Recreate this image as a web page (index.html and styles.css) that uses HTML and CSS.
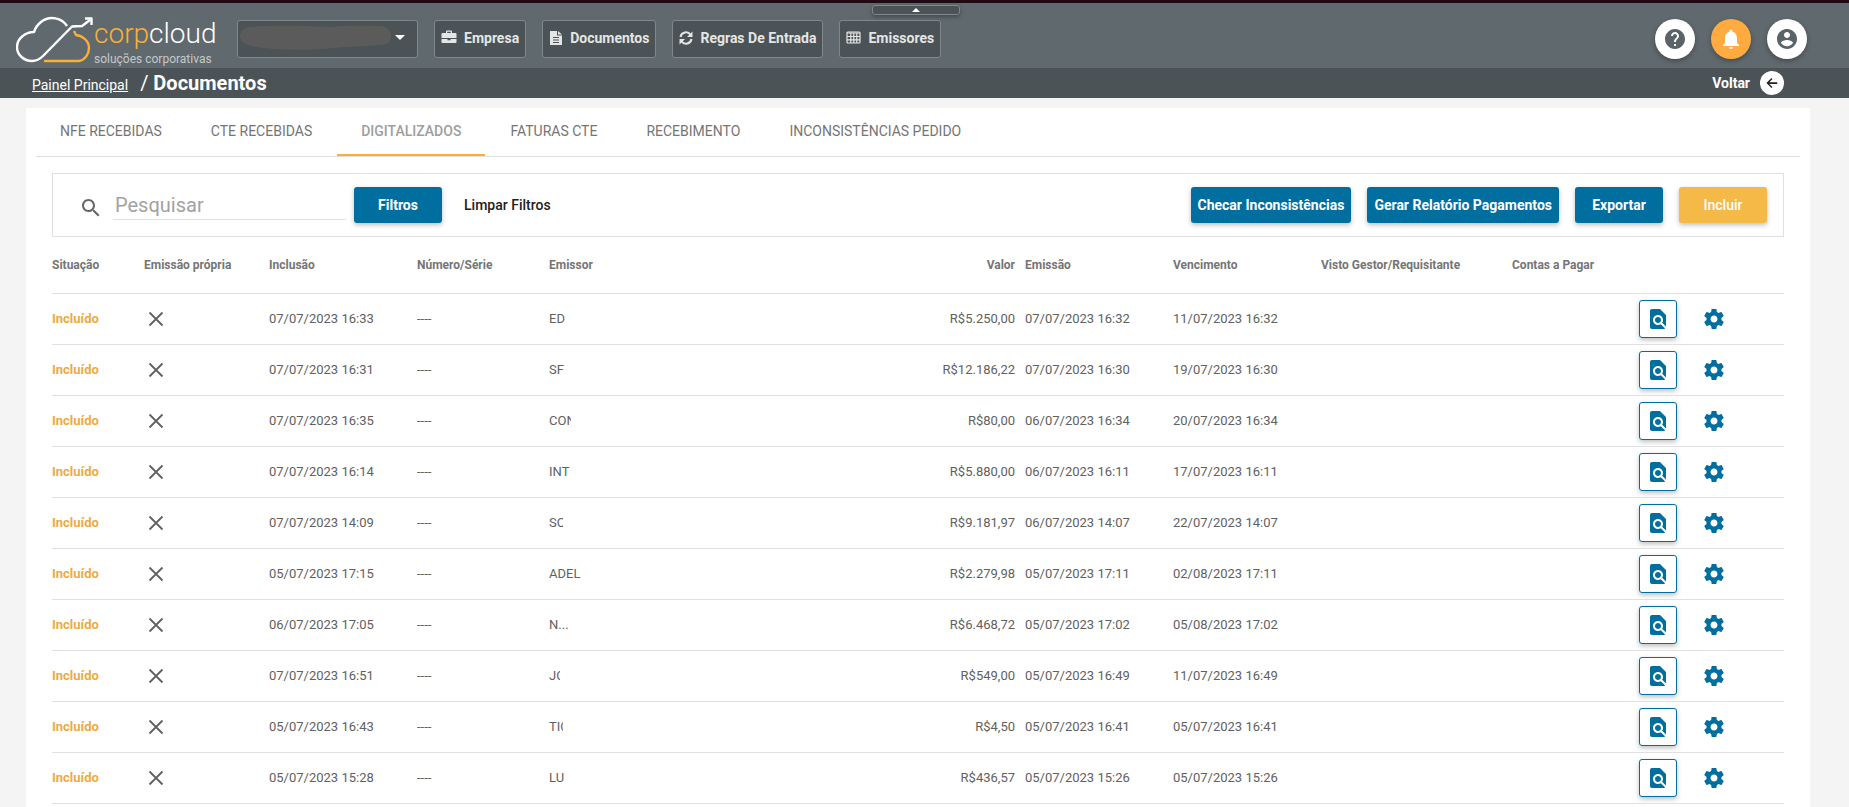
FILE: index.html
```html
<!DOCTYPE html>
<html lang="pt-BR">
<head>
<meta charset="utf-8">
<title>Documentos</title>
<link rel="stylesheet" href="styles.css">
</head>
<body>
<svg class="defs" aria-hidden="true">
  <symbol id="i-close" viewBox="0 0 24 24"><path d="M5.500 5.500L18.500 18.500M18.500 5.500L5.500 18.500" fill="none" stroke="currentColor" stroke-width="1.800"/></symbol>
  <symbol id="i-find" viewBox="0 0 24 24"><path d="M20 19.590V8l-6-6H6c-1.100 0-1.990.9-1.990 2L4 20c0 1.100.89 2 1.990 2H18c.45 0 .85-.15 1.190-.4l-4.430-4.430c-.8.520-1.740.83-2.760.83-2.760 0-5-2.240-5-5s2.240-5 5-5 5 2.240 5 5c0 1.020-.31 1.960-.83 2.750L20 19.590zM9 13c0 1.660 1.340 3 3 3s3-1.340 3-3-1.340-3-3-3-3 1.340-3 3z"/></symbol>
  <symbol id="i-gear" viewBox="0 0 24 24"><path d="M19.430 12.980c.04-.32.07-.64.07-.98s-.03-.66-.07-.98l2.110-1.650c.19-.15.24-.42.120-.64l-2-3.460c-.12-.22-.39-.3-.61-.22l-2.490 1c-.52-.4-1.080-.73-1.690-.98l-.38-2.650C14.460 2.180 14.250 2 14 2h-4c-.25 0-.46.18-.49.420l-.38 2.650c-.61.25-1.170.59-1.690.98l-2.490-1c-.23-.09-.49 0-.61.220l-2 3.460c-.13.220-.07.490.120.640l2.110 1.650c-.04.320-.07.650-.07.980s.03.660.07.980l-2.110 1.650c-.19.150-.24.420-.12.640l2 3.460c.12.220.39.300.61.220l2.490-1c.52.400 1.080.730 1.690.980l.38 2.650c.03.240.24.420.49.420h4c.25 0 .46-.18.490-.42l.38-2.650c.61-.25 1.170-.59 1.690-.98l2.490 1c.23.090.49 0 .61-.22l2-3.460c.12-.22.07-.49-.12-.64l-2.110-1.650zM12 15.500c-1.930 0-3.500-1.570-3.500-3.500s1.570-3.500 3.500-3.500 3.500 1.570 3.500 3.500-1.570 3.500-3.500 3.500z"/></symbol>
</svg>

<header class="topbar">
  <a class="logo" href="#" aria-label="corpcloud soluções corporativas">
    <svg class="logo-mark" viewBox="0 0 78 48" width="78" height="48" fill="none" stroke-linejoin="round" aria-hidden="true">
      <path d="M51 10C46 2 34-1 25 6C21 9 19 13 18 16C9 16 1 23 1 31C1 39 8 45 16 45C21 45 24 43 27 40L56 10.500L66 10L74 4" stroke="#fff" stroke-width="2.400"/>
      <path d="M69 2.500H75.500V9" stroke="#fff" stroke-width="2.400"/>
      <path d="M28 45H63C69 44 73 38 73 32C73 25 67 20 60 19L58 15" stroke="#fbb034" stroke-width="2.400"/>
    </svg>
    <span class="logo-text">
      <span class="logo-name"><span class="logo-corp">corp</span>cloud</span>
      <span class="logo-tag">soluções corporativas</span>
    </span>
  </a>
  <button class="nav-btn company" type="button" aria-label="Selecionar empresa">
    <svg width="151" height="25" viewBox="0 0 151 25" aria-hidden="true"><path d="M10 2C30 0 60 1 90 2C110 0 130 1 141 1C147 2 151 6 151 11C151 17 147 20 141 20C120 22 110 21 92 23C70 26 30 25 12 21C4 20 0 16 0 11C0 6 4 3 10 2Z" fill="#5b5b5b"/></svg>
    <span class="caret"></span>
  </button>
  <nav class="nav">
    <button class="nav-btn" type="button">
      <svg width="16" height="16" viewBox="0 0 16 16" fill="currentColor"><path d="M5 3V1.500Q5 .5 6 .5H10Q11 .5 11 1.500V3H14.500Q15.500 3 15.500 4V8H.5V4Q.5 3 1.500 3ZM6.200 3H9.800V1.700H6.200ZM.5 9H6.500V10.300H9.500V9H15.500V12Q15.500 13 14.500 13H1.500Q.5 13 .5 12Z"/></svg>Empresa</button>
    <button class="nav-btn" type="button">
      <svg width="14" height="16" viewBox="0 0 14 16" fill="currentColor"><path fill-rule="evenodd" d="M1 1H8V5.500H13V15H1ZM9 1L13 4.500H9ZM4 7V8H10V7ZM4 9.500V10.500H10V9.500ZM4 12V13H10V12Z"/></svg>Documentos</button>
    <button class="nav-btn" type="button">
      <svg width="14" height="16" viewBox="0 0 14 16" fill="none" stroke="currentColor" stroke-width="2"><path d="M1.500 7A5.500 5.500 0 0 1 11.500 4.800M12.500 9A5.500 5.500 0 0 1 2.500 11.200"/><path d="M13.500 1.500V7H8ZM.5 14.500V9H6Z" fill="currentColor" stroke="none"/></svg>Regras De Entrada</button>
    <button class="nav-btn" type="button">
      <svg width="15" height="16" viewBox="0 0 15 16" fill="none" stroke="currentColor" stroke-width="1.200"><rect x="1" y="2" width="13" height="11" rx="1"/><path d="M1 3H14M1 6.500H14M1 9.800H14M4.800 3V13M7.800 3V13M10.800 3V13"/></svg>Emissores</button>
  </nav>
  <button class="collapse" type="button" aria-label="Recolher menu"><span class="caret caret-up"></span></button>
  <div class="round-actions">
    <button class="round" type="button" aria-label="Ajuda"><svg width="24" height="24" viewBox="0 0 24 24" fill="currentColor"><path d="M12 2C6.480 2 2 6.480 2 12s4.480 10 10 10 10-4.480 10-10S17.520 2 12 2zm1 17h-2v-2h2v2zm2.070-7.750l-.9.920C13.450 12.900 13 13.500 13 15h-2v-.5c0-1.100.45-2.100 1.170-2.830l1.240-1.260c.37-.36.590-.86.590-1.410 0-1.100-.9-2-2-2s-2 .9-2 2H8c0-2.210 1.790-4 4-4s4 1.790 4 4c0 .88-.36 1.680-.93 2.250z"/></svg></button>
    <button class="round round-alert" type="button" aria-label="Notificações"><svg width="24" height="24" viewBox="0 0 24 24" fill="currentColor"><path d="M12 22c1.100 0 2-.9 2-2h-4c0 1.100.890 2 2 2zm6-6v-5c0-3.070-1.640-5.640-4.500-6.320V4c0-.83-.67-1.500-1.500-1.500s-1.500.67-1.500 1.500v.68C7.630 5.360 6 7.920 6 11v5l-2 2v1h16v-1l-2-2z"/></svg></button>
    <button class="round" type="button" aria-label="Conta"><svg width="24" height="24" viewBox="0 0 24 24" fill="currentColor"><path d="M12 2C6.480 2 2 6.480 2 12s4.480 10 10 10 10-4.480 10-10S17.520 2 12 2zm0 3c1.660 0 3 1.340 3 3s-1.340 3-3 3-3-1.340-3-3 1.340-3 3-3zm0 14.200c-2.500 0-4.710-1.280-6-3.220.03-1.990 4-3.080 6-3.080 1.990 0 5.970 1.090 6 3.080-1.290 1.940-3.500 3.220-6 3.220z"/></svg></button>
  </div>
</header>

<div class="subbar">
  <div class="crumbs"><a href="#">Painel Principal</a><h1>/ <b>Documentos</b></h1></div>
  <button class="back" type="button">Voltar <span class="back-icon"><svg width="14" height="14" viewBox="0 0 24 24" fill="currentColor"><path d="M21 10.500H7.500l5.300-5.300L11 3.400 2.500 12l8.500 8.600 1.800-1.800-5.300-5.300H21z"/></svg></span></button>
</div>

<main class="card">
  <nav class="tabs">
    <a href="#">NFE RECEBIDAS</a><a href="#">CTE RECEBIDAS</a><a class="active" href="#">DIGITALIZADOS</a><a href="#">FATURAS CTE</a><a href="#">RECEBIMENTO</a><a href="#">INCONSISTÊNCIAS PEDIDO</a>
  </nav>
  <form class="filters">
    <svg class="search-icon" width="24" height="24" viewBox="0 0 24 24" fill="currentColor"><path d="M15.500 14h-.79l-.28-.27C15.410 12.590 16 11.110 16 9.500 16 5.910 13.090 3 9.500 3S3 5.910 3 9.500 5.910 16 9.500 16c1.610 0 3.090-.59 4.230-1.570l.27.280v.79l5 4.990L20.490 19l-4.990-5zm-6 0C7.010 14 5 11.990 5 9.500S7.010 5 9.500 5 14 7.010 14 9.500 11.990 14 9.500 14z"/></svg>
    <input class="search" type="text" placeholder="Pesquisar" aria-label="Pesquisar">
    <button class="btn" type="button">Filtros</button>
    <button class="btn-flat" type="button">Limpar Filtros</button>
    <div class="filter-actions">
      <button class="btn" type="button">Checar Inconsistências</button>
      <button class="btn" type="button">Gerar Relatório Pagamentos</button>
      <button class="btn" type="button">Exportar</button>
      <button class="btn btn-add" type="button">Incluir</button>
    </div>
  </form>
  <table class="docs">
    <colgroup><col class="c-status"><col class="c-own"><col class="c-date"><col class="c-num"><col><col class="c-value"><col class="c-date"><col class="c-date"><col class="c-visto"><col class="c-contas"><col class="c-view"><col class="c-gear"></colgroup>
    <thead><tr><th>Situação</th><th>Emissão própria</th><th>Inclusão</th><th>Número/Série</th><th>Emissor</th><th class="value">Valor</th><th>Emissão</th><th>Vencimento</th><th>Visto Gestor/Requisitante</th><th>Contas a Pagar</th><th></th><th></th></tr></thead>
    <tbody>
      <tr><td class="status">Incluído</td><td class="own"><svg><use href="#i-close"/></svg></td><td>07/07/2023 16:33</td><td>----</td><td>ED</td><td class="value">R$5.250,00</td><td>07/07/2023 16:32</td><td>11/07/2023 16:32</td><td></td><td></td><td><button class="view" type="button" aria-label="Visualizar"><svg><use href="#i-find"/></svg></button></td><td><button class="gear" type="button" aria-label="Opções"><svg><use href="#i-gear"/></svg></button></td></tr>
      <tr><td class="status">Incluído</td><td class="own"><svg><use href="#i-close"/></svg></td><td>07/07/2023 16:31</td><td>----</td><td>SF</td><td class="value">R$12.186,22</td><td>07/07/2023 16:30</td><td>19/07/2023 16:30</td><td></td><td></td><td><button class="view" type="button" aria-label="Visualizar"><svg><use href="#i-find"/></svg></button></td><td><button class="gear" type="button" aria-label="Opções"><svg><use href="#i-gear"/></svg></button></td></tr>
      <tr><td class="status">Incluído</td><td class="own"><svg><use href="#i-close"/></svg></td><td>07/07/2023 16:35</td><td>----</td><td><span class="cut at-22">CON</span></td><td class="value">R$80,00</td><td>06/07/2023 16:34</td><td>20/07/2023 16:34</td><td></td><td></td><td><button class="view" type="button" aria-label="Visualizar"><svg><use href="#i-find"/></svg></button></td><td><button class="gear" type="button" aria-label="Opções"><svg><use href="#i-gear"/></svg></button></td></tr>
      <tr><td class="status">Incluído</td><td class="own"><svg><use href="#i-close"/></svg></td><td>07/07/2023 16:14</td><td>----</td><td>INT</td><td class="value">R$5.880,00</td><td>06/07/2023 16:11</td><td>17/07/2023 16:11</td><td></td><td></td><td><button class="view" type="button" aria-label="Visualizar"><svg><use href="#i-find"/></svg></button></td><td><button class="gear" type="button" aria-label="Opções"><svg><use href="#i-gear"/></svg></button></td></tr>
      <tr><td class="status">Incluído</td><td class="own"><svg><use href="#i-close"/></svg></td><td>07/07/2023 14:09</td><td>----</td><td><span class="cut at-14">SO</span></td><td class="value">R$9.181,97</td><td>06/07/2023 14:07</td><td>22/07/2023 14:07</td><td></td><td></td><td><button class="view" type="button" aria-label="Visualizar"><svg><use href="#i-find"/></svg></button></td><td><button class="gear" type="button" aria-label="Opções"><svg><use href="#i-gear"/></svg></button></td></tr>
      <tr><td class="status">Incluído</td><td class="own"><svg><use href="#i-close"/></svg></td><td>05/07/2023 17:15</td><td>----</td><td>ADEL</td><td class="value">R$2.279,98</td><td>05/07/2023 17:11</td><td>02/08/2023 17:11</td><td></td><td></td><td><button class="view" type="button" aria-label="Visualizar"><svg><use href="#i-find"/></svg></button></td><td><button class="gear" type="button" aria-label="Opções"><svg><use href="#i-gear"/></svg></button></td></tr>
      <tr><td class="status">Incluído</td><td class="own"><svg><use href="#i-close"/></svg></td><td>06/07/2023 17:05</td><td>----</td><td>N...</td><td class="value">R$6.468,72</td><td>05/07/2023 17:02</td><td>05/08/2023 17:02</td><td></td><td></td><td><button class="view" type="button" aria-label="Visualizar"><svg><use href="#i-find"/></svg></button></td><td><button class="gear" type="button" aria-label="Opções"><svg><use href="#i-gear"/></svg></button></td></tr>
      <tr><td class="status">Incluído</td><td class="own"><svg><use href="#i-close"/></svg></td><td>07/07/2023 16:51</td><td>----</td><td><span class="cut at-11">JO</span></td><td class="value">R$549,00</td><td>05/07/2023 16:49</td><td>11/07/2023 16:49</td><td></td><td></td><td><button class="view" type="button" aria-label="Visualizar"><svg><use href="#i-find"/></svg></button></td><td><button class="gear" type="button" aria-label="Opções"><svg><use href="#i-gear"/></svg></button></td></tr>
      <tr><td class="status">Incluído</td><td class="own"><svg><use href="#i-close"/></svg></td><td>05/07/2023 16:43</td><td>----</td><td><span class="cut at-14">TIC</span></td><td class="value">R$4,50</td><td>05/07/2023 16:41</td><td>05/07/2023 16:41</td><td></td><td></td><td><button class="view" type="button" aria-label="Visualizar"><svg><use href="#i-find"/></svg></button></td><td><button class="gear" type="button" aria-label="Opções"><svg><use href="#i-gear"/></svg></button></td></tr>
      <tr><td class="status">Incluído</td><td class="own"><svg><use href="#i-close"/></svg></td><td>05/07/2023 15:28</td><td>----</td><td>LU</td><td class="value">R$436,57</td><td>05/07/2023 15:26</td><td>05/07/2023 15:26</td><td></td><td></td><td><button class="view" type="button" aria-label="Visualizar"><svg><use href="#i-find"/></svg></button></td><td><button class="gear" type="button" aria-label="Opções"><svg><use href="#i-gear"/></svg></button></td></tr>
    </tbody>
  </table>
</main>
</body>
</html>
```

FILE: styles.css
```css
* { box-sizing: border-box; }
html, body { height: 100%; }
body {
  margin: 0;
  display: flex;
  flex-direction: column;
  background: #f4f4f4;
  color: #616161;
  font-family: Roboto, "Liberation Sans", sans-serif;
  font-size: 13px;
}
button { font: inherit; margin: 0; padding: 0; border: 0; background: none; cursor: pointer; }
svg { display: block; }
.defs { display: none; }

.topbar {
  position: relative;
  flex: none;
  display: flex;
  align-items: center;
  height: 68px;
  padding: 6px 42px 0 16px;
  border-top: 3px solid #200b15;
  background: #60696e;
}
.logo { display: flex; width: 221px; height: 54px; color: #fff; text-decoration: none; }
.logo-mark { flex: none; margin-top: 4px; }
.logo-text { display: flex; flex-direction: column; }
.logo-name { font-size: 28px; line-height: 38px; font-weight: 300; margin-top: 3px; }
.logo-corp { color: #fbb034; }
.logo-tag { font-size: 12px; line-height: 12px; color: #c4c8ca; white-space: nowrap; }

.nav { display: flex; gap: 16px; margin-left: 16px; }
.nav-btn {
  display: flex;
  align-items: center;
  gap: 7px;
  height: 38px;
  padding: 0 6px 1px;
  border: 1px solid #80888c;
  border-radius: 3px;
  background: #4b5356;
  color: #e4e6e6;
  font-size: 14px;
  font-weight: 700;
}
.company { width: 181px; padding: 0 12px 2px 2px; justify-content: space-between; gap: 0; }
.caret { border: 5px solid transparent; border-top-color: #fff; border-bottom: 0; }
.caret-up { border: 4px solid transparent; border-bottom-color: #fff; border-top: 0; }
.collapse {
  position: absolute;
  top: 2px;
  left: 872px;
  width: 88px;
  height: 10px;
  display: flex;
  align-items: center;
  justify-content: center;
  border: 1px solid #80888c;
  border-radius: 3px;
  background: #4b5356;
  box-shadow: 0 2px 4px rgba(0, 0, 0, .3);
}
.round-actions { display: flex; gap: 16px; margin-left: auto; }
.round {
  display: flex;
  align-items: center;
  justify-content: center;
  width: 40px;
  height: 40px;
  border-radius: 50%;
  background: #fff;
  color: #5a6367;
  box-shadow: 0 2px 5px rgba(0, 0, 0, .3);
}
.round-alert { background: #ffab40; color: #fff; }

.subbar {
  flex: none;
  display: flex;
  align-items: center;
  justify-content: space-between;
  height: 30px;
  padding: 0 65px 0 32px;
  background: #4b5356;
  color: #fff;
}
.crumbs { display: flex; align-items: baseline; gap: 12px; }
.crumbs a { color: #fff; font-size: 14px; }
.crumbs h1 { margin: 0; font-size: 20px; line-height: 30px; font-weight: 400; }
.back { display: flex; align-items: center; gap: 10px; color: #fff; font-size: 14px; font-weight: 700; }
.back-icon {
  display: flex;
  align-items: center;
  justify-content: center;
  width: 24px;
  height: 24px;
  border-radius: 50%;
  background: #fff;
  color: #222;
}

.card { flex: 1 0 auto; margin: 10px 39px 0 26px; padding: 0 10px; background: #fff; }
.tabs { display: flex; gap: 1px; height: 49px; border-bottom: 1px solid #e0e0e0; }
.tabs a {
  display: flex;
  align-items: center;
  padding: 0 24px;
  border-bottom: 2px solid transparent;
  color: #757575;
  font-size: 14px;
  text-decoration: none;
}
.tabs .active { border-color: #ffab40; color: #9e9e9e; font-weight: 500; }

.filters {
  display: flex;
  align-items: center;
  height: 64px;
  margin: 16px 16px 0;
  padding: 0 16px 0 26px;
  border: 1px solid #e0e0e0;
}
.search-icon { flex: none; margin: 5px 10px 0 0; color: #666; }
.search {
  width: 233px;
  height: 30px;
  margin-right: 8px;
  padding: 0 2px;
  border: 0;
  border-bottom: 1px solid #e0e0e0;
  outline: 0;
  background: none;
  color: #616161;
  font: 400 20px/28px Roboto, "Liberation Sans", sans-serif;
}
.search::placeholder { color: #a2a2a2; opacity: 1; }
.btn {
  min-width: 88px;
  height: 36px;
  padding: 0 7px 1px;
  border-radius: 3px;
  background: #006e9f;
  color: #fff;
  font-size: 14px;
  font-weight: 700;
  white-space: nowrap;
  box-shadow: 0 2px 5px rgba(0, 0, 0, .26);
}
.btn-add { background: #f5b947; font-weight: 500; }
.btn-flat { margin-left: 22px; padding-bottom: 1px; color: #212121; font-size: 14px; font-weight: 500; }
.filter-actions { display: flex; gap: 16px; margin-left: auto; }

.docs { width: calc(100% - 32px); margin: 0 16px; table-layout: fixed; border-collapse: collapse; }
.docs th, .docs td { padding: 0; border-bottom: 1px solid #e0e0e0; text-align: left; white-space: nowrap; }
.docs th { height: 56px; color: #757575; font-size: 12px; font-weight: 700; }
.docs td { height: 51px; }
.docs .value { padding-right: 10px; text-align: right; }
.docs .status { color: #ebab42; font-weight: 700; }
.c-status { width: 92px; }
.c-own { width: 125px; }
.c-date { width: 148px; }
.c-num { width: 132px; }
.c-value { width: 120px; }
.c-visto { width: 191px; }
.c-contas { width: 127px; }
.c-view { width: 63px; }
.c-gear { width: 82px; }
.own svg { width: 24px; height: 24px; color: #616161; }
.view {
  display: flex;
  align-items: center;
  justify-content: center;
  width: 38px;
  height: 38px;
  border: 1px solid #006e9f;
  border-radius: 3px;
  background: #fff;
  box-shadow: 0 2px 5px rgba(0, 0, 0, .26);
}
.view svg, .gear svg { width: 24px; height: 24px; fill: #006e9f; }
.gear { display: block; }

/* White cover that hides the end of a redacted issuer name */
.cut { position: relative; }
.cut::after { content: ""; position: absolute; top: 0; bottom: 0; width: 24px; background: #fff; }
.at-11::after { left: 11px; }
.at-14::after { left: 14px; }
.at-22::after { left: 22px; }
```
